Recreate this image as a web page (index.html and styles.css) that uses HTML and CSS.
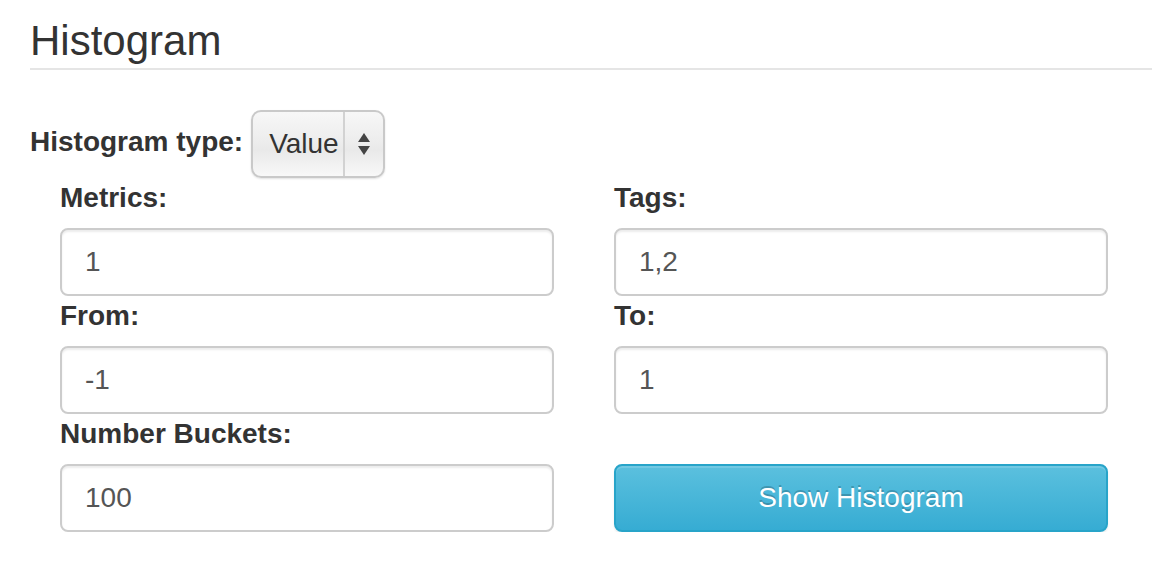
FILE: index.html
```html
<!DOCTYPE html>
<html>
<head>
<meta charset="utf-8">
<link rel="stylesheet" href="styles.css">
</head>
<body>
<div class="page">
  <div class="header"><h1 class="title">Histogram</h1></div>
  <form class="form">
    <div class="type-row">
      <label class="type-label">Histogram type:</label>
      <div class="select">
        <span class="select-value">Value</span>
        <span class="select-arrows">
          <svg width="14" height="24" viewBox="0 0 14 24"><path d="M7 1 L13 10 L1 10 Z" fill="#444"/><path d="M1 14 L13 14 L7 23 Z" fill="#444"/></svg>
        </span>
      </div>
    </div>
    <div class="fields">
      <div class="field">
        <label class="label">Metrics:</label>
        <input class="input" type="text" value="1">
      </div>
      <div class="field">
        <label class="label">Tags:</label>
        <input class="input" type="text" value="1,2">
      </div>
      <div class="field">
        <label class="label">From:</label>
        <input class="input" type="text" value="-1">
      </div>
      <div class="field">
        <label class="label">To:</label>
        <input class="input" type="text" value="1">
      </div>
      <div class="field">
        <label class="label">Number Buckets:</label>
        <input class="input" type="text" value="100">
      </div>
      <div class="field field-button">
        <button class="btn" type="button">Show Histogram</button>
      </div>
    </div>
  </form>
</div>
</body>
</html>
```
FILE: styles.css
```css
html, body {
  margin: 0;
  padding: 0;
  background: #fff;
}
body {
  font-family: "Liberation Sans", Arial, sans-serif;
  color: #333;
}
.page {
  padding-top: 16px;
}
.header {
  margin-left: 30px;
  border-bottom: 2px solid #e5e5e5;
}
.title {
  margin: 0 0 2px 0;
  font-size: 42px;
  font-weight: normal;
  line-height: 50px;
  color: #333;
}
.form {
  margin: 40px 0 0 0;
}
.type-row {
  display: flex;
  align-items: center;
  margin-left: 30px;
  gap: 8px;
  height: 68px;
}
.type-label {
  font-size: 28px;
  font-weight: bold;
  line-height: 40px;
  position: relative;
  top: -2px;
}
.select {
  display: flex;
  align-items: stretch;
  box-sizing: border-box;
  width: 134px;
  height: 68px;
  border: 2px solid #c9c9c9;
  border-radius: 10px;
  background: linear-gradient(to bottom, #f7f7f7 0%, #ededed 45%, #e9e9e9 60%, #f8f8f8 100%);
  box-shadow: 0 1px 2px rgba(0,0,0,0.12);
}
.select-value {
  flex: 1;
  display: flex;
  align-items: center;
  padding-left: 16px;
  font-size: 28px;
  color: #333;
  border-right: 2px solid #d2d2d2;
}
.select-arrows {
  width: 38px;
  display: flex;
  align-items: center;
  justify-content: center;
}
.fields {
  display: grid;
  grid-template-columns: 494px 494px;
  column-gap: 60px;
  margin-left: 60px;
}
.field {
  display: flex;
  flex-direction: column;
}
.label {
  font-size: 28px;
  font-weight: bold;
  line-height: 40px;
  margin-bottom: 10px;
  color: #333;
}
.input {
  box-sizing: border-box;
  height: 68px;
  width: 100%;
  border: 2px solid #ccc;
  border-radius: 8px;
  padding: 0 23px;
  font-family: "Liberation Sans", Arial, sans-serif;
  font-size: 28px;
  color: #555;
  background: #fff;
  box-shadow: inset 0 2px 2px rgba(0,0,0,0.075);
  outline: none;
}
.field-button {
  justify-content: flex-end;
}
.btn {
  box-sizing: border-box;
  height: 68px;
  width: 100%;
  border: 2px solid #28a4c9;
  border-radius: 8px;
  background: linear-gradient(to bottom, #5bc0de 0%, #36acd3 100%);
  color: #fff;
  font-family: "Liberation Sans", Arial, sans-serif;
  font-size: 28px;
  text-shadow: 0 -2px 0 rgba(0,0,0,0.2);
  box-shadow: inset 0 2px 0 rgba(255,255,255,0.15), 0 2px 2px rgba(0,0,0,0.075);
  padding: 0;
}
```
